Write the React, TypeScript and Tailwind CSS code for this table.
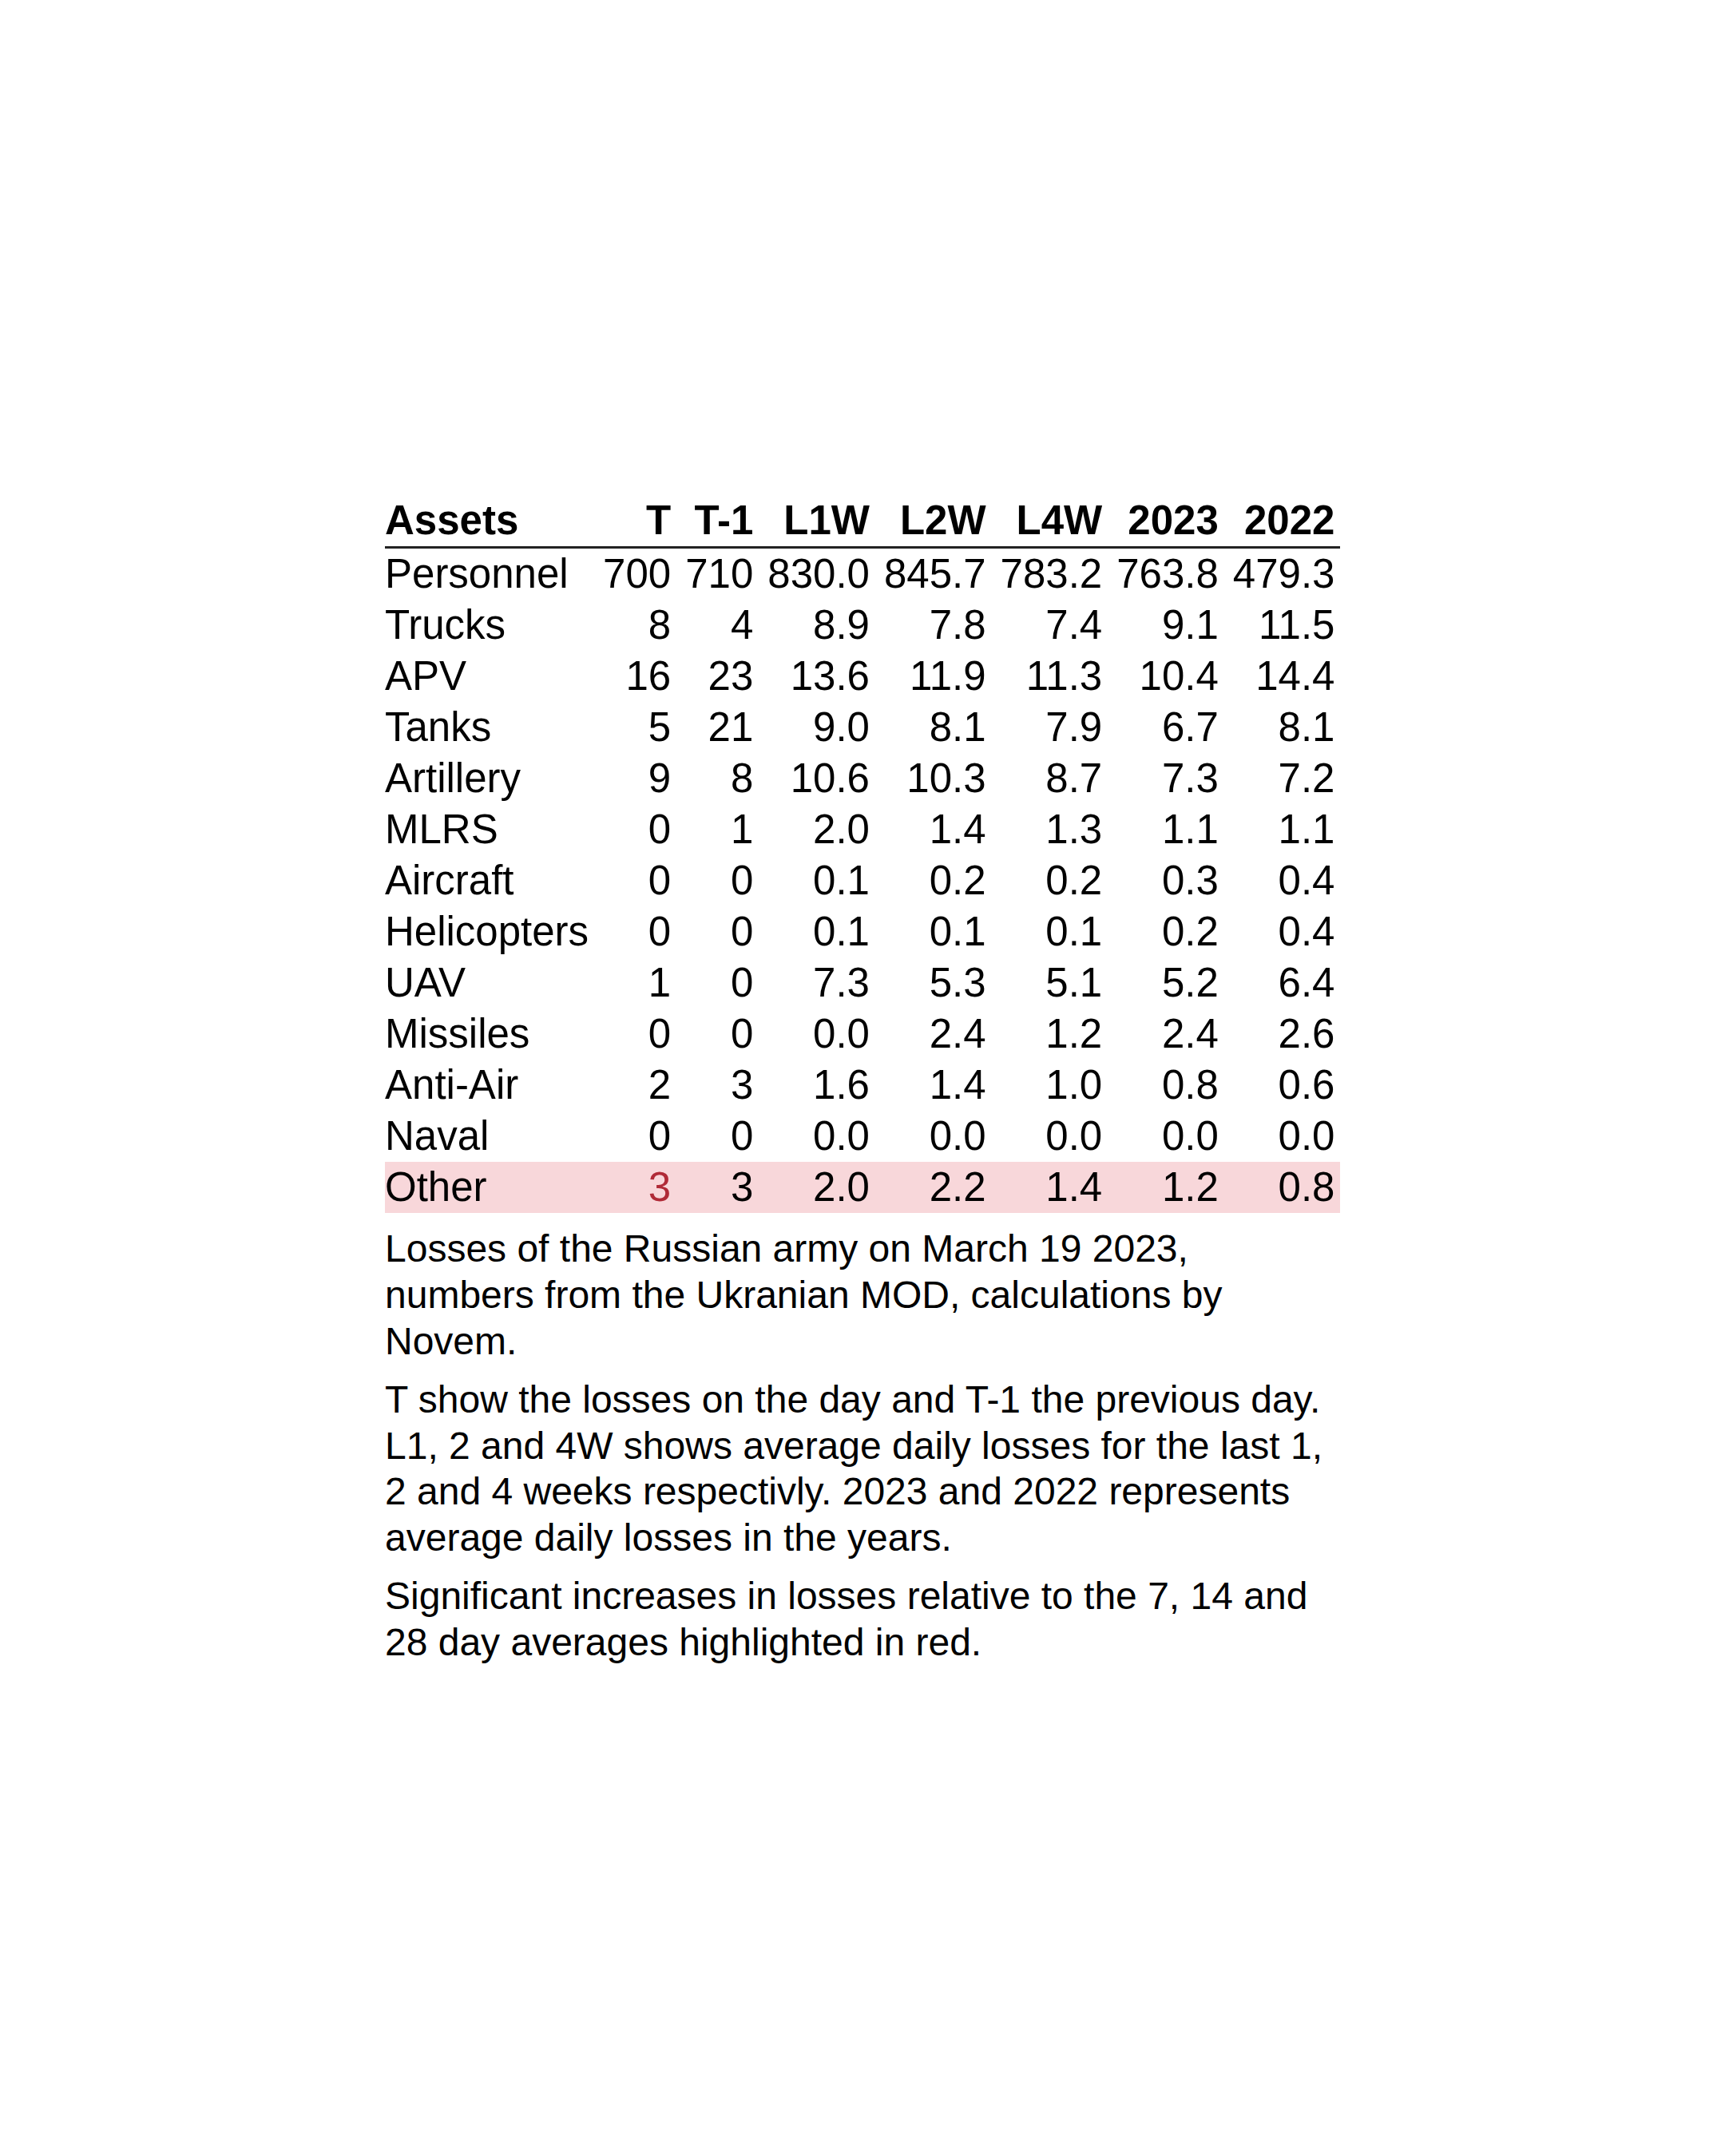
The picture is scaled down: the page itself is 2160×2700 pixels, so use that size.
const columns = ["T", "T-1", "L1W", "L2W", "L4W", "2023", "2022"];

type Row = {
  asset: string;
  values: string[];
  highlight?: boolean;
  // indexes of values that are flagged red
  flagged?: number[];
};

const rows: Row[] = [
  { asset: "Personnel", values: ["700", "710", "830.0", "845.7", "783.2", "763.8", "479.3"] },
  { asset: "Trucks", values: ["8", "4", "8.9", "7.8", "7.4", "9.1", "11.5"] },
  { asset: "APV", values: ["16", "23", "13.6", "11.9", "11.3", "10.4", "14.4"] },
  { asset: "Tanks", values: ["5", "21", "9.0", "8.1", "7.9", "6.7", "8.1"] },
  { asset: "Artillery", values: ["9", "8", "10.6", "10.3", "8.7", "7.3", "7.2"] },
  { asset: "MLRS", values: ["0", "1", "2.0", "1.4", "1.3", "1.1", "1.1"] },
  { asset: "Aircraft", values: ["0", "0", "0.1", "0.2", "0.2", "0.3", "0.4"] },
  { asset: "Helicopters", values: ["0", "0", "0.1", "0.1", "0.1", "0.2", "0.4"] },
  { asset: "UAV", values: ["1", "0", "7.3", "5.3", "5.1", "5.2", "6.4"] },
  { asset: "Missiles", values: ["0", "0", "0.0", "2.4", "1.2", "2.4", "2.6"] },
  { asset: "Anti-Air", values: ["2", "3", "1.6", "1.4", "1.0", "0.8", "0.6"] },
  { asset: "Naval", values: ["0", "0", "0.0", "0.0", "0.0", "0.0", "0.0"] },
  { asset: "Other", values: ["3", "3", "2.0", "2.2", "1.4", "1.2", "0.8"], highlight: true, flagged: [0] },
];

const App = () => {
  return (
    <div className="min-h-screen flex items-center justify-center bg-white text-black [font-family:'Liberation_Sans',Arial,sans-serif]">
      <div className="w-[1196px] pt-[6px]">
        {/* Losses table */}
        <table className="w-full border-separate border-spacing-0 text-[51px] leading-[64px]">
          <thead>
            <tr>
              <th className="text-left font-bold p-0 border-b-[3px] border-[#222]">Assets</th>
              {columns.map((col, i) => (
                <th
                  key={col}
                  className={
                    i === columns.length - 1
                      ? "text-right font-bold p-0 pl-[18px] pr-[7px] border-b-[3px] border-[#222]"
                      : "text-right font-bold p-0 pl-[18px] border-b-[3px] border-[#222]"
                  }
                >
                  {col}
                </th>
              ))}
            </tr>
          </thead>
          <tbody>
            {rows.map((row) => (
              <tr key={row.asset} className={row.highlight ? "bg-[#f8d7da]" : ""}>
                <td className="text-left p-0 whitespace-nowrap">{row.asset}</td>
                {row.values.map((v, i) => {
                  const flagged = row.flagged?.includes(i);
                  const last = i === row.values.length - 1;
                  return (
                    <td
                      key={i}
                      className={
                        (last ? "text-right p-0 pl-[18px] pr-[7px]" : "text-right p-0 pl-[18px]") +
                        (flagged ? " text-[#b02a37]" : "")
                      }
                    >
                      {v}
                    </td>
                  );
                })}
              </tr>
            ))}
          </tbody>
        </table>

        {/* Notes */}
        <div className="text-[48px] leading-[1.2]">
          <p className="mt-4">
            Losses of the Russian army on March 19 2023, numbers from the Ukranian MOD, calculations by Novem.
          </p>
          <p className="mt-4">
            T show the losses on the day and T-1 the previous day. L1, 2 and 4W shows average daily losses for the
            last 1, 2 and 4 weeks respectivly. 2023 and 2022 represents average daily losses in the years.
          </p>
          <p className="mt-4">
            Significant increases in losses relative to the 7, 14 and 28 day averages highlighted in red.
          </p>
        </div>
      </div>
    </div>
  );
};

export default App;
